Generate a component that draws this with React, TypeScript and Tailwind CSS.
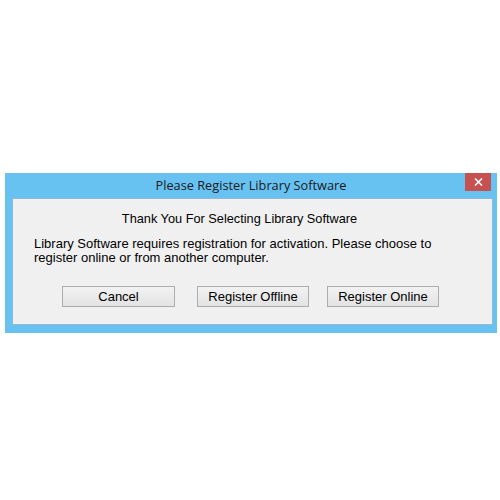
export default function App() {
  const buttons = [
    { label: "Cancel", cls: "w-[113px]" },
    { label: "Register Offline", cls: "w-[112px] ml-[22px]" },
    { label: "Register Online", cls: "w-[112px] ml-[18px]" },
  ];

  return (
    <div className="w-[500px] h-[500px] bg-white pt-[173px] pl-[5px] [font-family:'Liberation_Sans',Arial,sans-serif]">
      <div className="relative w-[492px] bg-[#67c1f1] flex flex-col">
        {/* Title bar */}
        <div className="h-[25px] flex items-center justify-center text-[12.75px] text-[#1a1a1a] [font-family:'Open_Sans',sans-serif]">
          Please Register Library Software
        </div>
        <div className="absolute top-0 right-[6px] w-[26px] h-[18px] bg-[#c75050] flex items-center justify-center">
          <svg width="9" height="8" viewBox="0 0 9 8">
            <path d="M1 0.5 L8 7.5 M8 0.5 L1 7.5" stroke="white" strokeWidth="1.6" />
          </svg>
        </div>

        {/* Client area */}
        <div className="ml-[7px] mr-[4px] mb-[8px] h-[127px] bg-[#f0f0f0] border border-[#93b9d3] flex flex-col text-[13px] text-black">
          <div className="mt-[10px] text-center pr-[26px] text-[12.75px]">
            Thank You For Selecting Library Software
          </div>
          <div className="mt-[9px] pl-[21px] leading-[14px]">
            Library Software requires registration for activation. Please choose to
            <br />
            register online or from another computer.
          </div>
          <div className="mt-[21px] flex pl-[49px]">
            {buttons.map((b) => (
              <div
                key={b.label}
                className={`${b.cls} h-[21px] border border-[#adadad] bg-gradient-to-b from-[#f2f2f2] to-[#e3e3e3] flex items-center justify-center`}
              >
                {b.label}
              </div>
            ))}
          </div>
        </div>
      </div>
    </div>
  );
}
